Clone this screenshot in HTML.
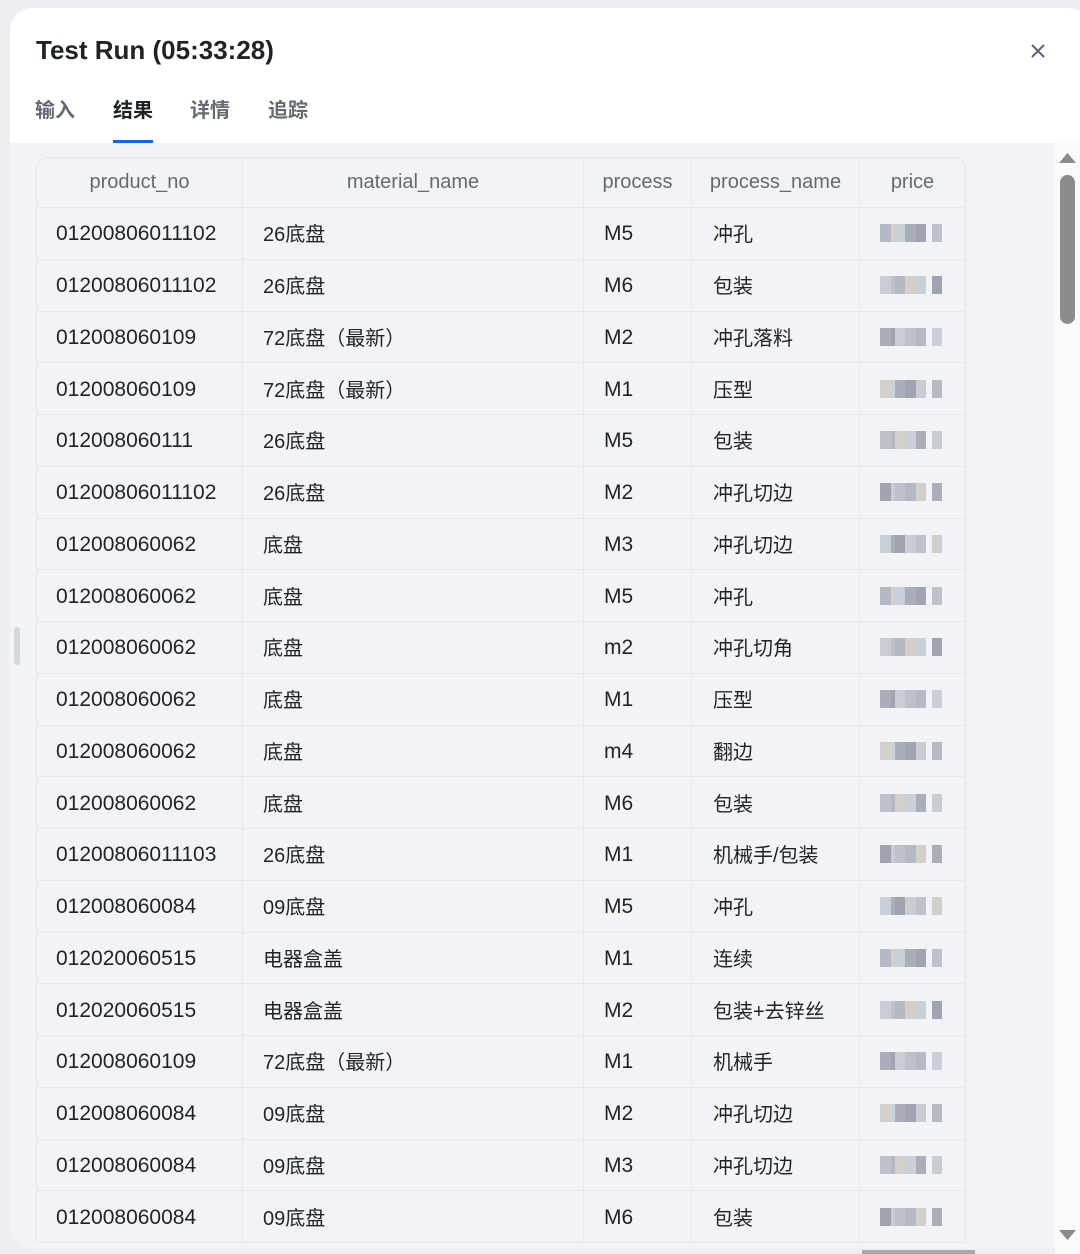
<!DOCTYPE html>
<html><head><meta charset="utf-8"><style>
*{margin:0;padding:0;box-sizing:border-box}
body{width:1080px;height:1254px;background:#eceef2;position:relative;overflow:hidden;font-family:"Liberation Sans","Noto Sans CJK SC",sans-serif}
.card{position:absolute;left:10px;top:8px;width:1080px;height:1241px;background:#f2f3f6;border-radius:22px;overflow:hidden}
.head{position:absolute;left:0;top:0;width:100%;height:135px;background:#fff}
.title{position:absolute;left:26px;top:27px;font-size:26px;font-weight:bold;color:#1f2329}
.close{position:absolute;left:1018px;top:33px;width:20px;height:20px}
.tab{position:absolute;top:86px;font-size:20px;font-weight:bold;color:#646a73}
.ul{position:absolute;left:103px;top:132px;width:40px;height:3px;background:#1664ff}
.tbl{position:absolute;left:26px;top:149px;width:930px;border:1px solid #e4e6ea;border-bottom:none;border-radius:12px 12px 0 0;overflow:hidden}
.row{position:relative;height:51.75px;border-bottom:1px solid #e6e8ec;display:flex}
.hdr{height:50px;color:#646a73}
.c{position:relative;height:100%;display:flex;align-items:center;border-right:1px solid #e6e8ec;color:#1f2329;font-size:20px}
.hdr .c{justify-content:center;color:#646a73;font-size:20px}
.c1{width:206px;padding-left:19px;font-size:21px;padding-top:2px}
.c2{width:341px;padding-left:20px;padding-bottom:1px}
.c3{width:108px;padding-left:20px;font-size:21px;padding-top:2px}
.c4{width:168px;padding-left:21px;padding-bottom:1px}
.c5{width:105px;border-right:none;padding-left:20px}
.pb{display:flex;height:18px}
.pb i{display:block;height:18px}
.sb{position:absolute;left:1055px;top:143px;width:25px;height:1111px;background:#fafafa}
</style></head><body>
<div class="card">
<div class="head">
<div class="title">Test Run (05:33:28)</div>
<svg class="close" viewBox="0 0 20 20"><path d="M4 4L16 16M16 4L4 16" stroke="#5b6270" stroke-width="2"/></svg>
<div class="tab" style="left:25px">输入</div>
<div class="tab" style="left:103px;color:#1f2329">结果</div>
<div class="tab" style="left:180px">详情</div>
<div class="tab" style="left:258px">追踪</div>
<div class="ul"></div>
</div>
<div class="tbl">
<div class="row hdr"><div class="c c1" style="padding:0">product_no</div><div class="c c2" style="padding:0">material_name</div><div class="c c3" style="padding:0">process</div><div class="c c4" style="padding:0">process_name</div><div class="c c5" style="padding:0">price</div></div>
</div>
<div style="position:absolute;left:4px;top:619px;width:6px;height:38px;border-radius:3px;background:#d4d7dc"></div>
</div>
<div class="sb">
<svg style="position:absolute;left:4px;top:9px" width="17" height="12"><path d="M0 11L8.5 1L17 11Z" fill="#8a8a8a"/></svg>
<div style="position:absolute;left:5px;top:32px;width:15px;height:149px;border-radius:8px;background:#8c8c8c"></div>
<svg style="position:absolute;left:4px;top:1086px" width="17" height="12"><path d="M0 1L8.5 11L17 1Z" fill="#8a8a8a"/></svg>
</div>
<div style="position:absolute;left:862px;top:1250px;width:113px;height:4px;background:#a8a8a8"></div>
<script>
const d=[["01200806011102","26底盘","M5","冲孔"],["01200806011102","26底盘","M6","包装"],["012008060109","72底盘（最新）","M2","冲孔落料"],["012008060109","72底盘（最新）","M1","压型"],["012008060111","26底盘","M5","包装"],["01200806011102","26底盘","M2","冲孔切边"],["012008060062","底盘","M3","冲孔切边"],["012008060062","底盘","M5","冲孔"],["012008060062","底盘","m2","冲孔切角"],["012008060062","底盘","M1","压型"],["012008060062","底盘","m4","翻边"],["012008060062","底盘","M6","包装"],["01200806011103","26底盘","M1","机械手/包装"],["012008060084","09底盘","M5","冲孔"],["012020060515","电器盒盖","M1","连续"],["012020060515","电器盒盖","M2","包装+去锌丝"],["012008060109","72底盘（最新）","M1","机械手"],["012008060084","09底盘","M2","冲孔切边"],["012008060084","09底盘","M3","冲孔切边"],["012008060084","09底盘","M6","包装"]];
const t=document.querySelector('.tbl');let h='';
const cols=['#b4b9c3','#c9ccd3','#a9aeb8','#d3d0cc','#bcc1ca','#9fa5b0','#c8d0da'];
d.forEach((r,i)=>{let p='';const w=[11,4,10,11,10,6,10];for(let k=0;k<7;k++){p+=`<i style="width:${w[k]}px;background:${k==5?'transparent':cols[(i+k*3)%7]}"></i>`}
h+=`<div class="row"><div class="c c1">${r[0]}</div><div class="c c2">${r[1]}</div><div class="c c3">${r[2]}</div><div class="c c4">${r[3]}</div><div class="c c5"><div class="pb">${p}</div></div></div>`});
t.insertAdjacentHTML('beforeend',h);
</script>
</body></html>
